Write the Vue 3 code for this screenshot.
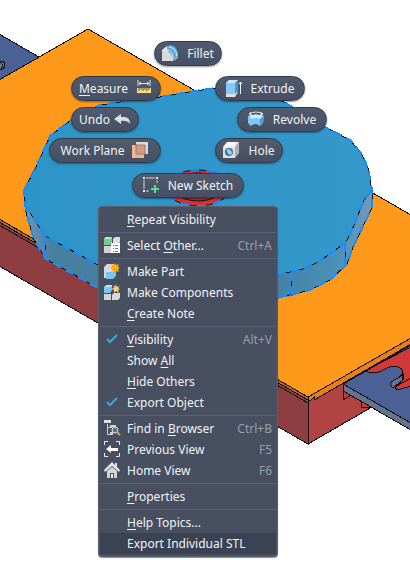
<script setup>
const tools = [
  { id: 'fillet', label: 'Fillet', icon: 'fillet' },
  { id: 'measure', key: 'M', label: 'easure', icon: 'measure', after: true },
  { id: 'extrude', label: 'Extrude', icon: 'extrude' },
  { id: 'undo', label: 'Undo', icon: 'undo', after: true },
  { id: 'revolve', label: 'Revolve', icon: 'revolve' },
  { id: 'plane', label: 'Work Plane', icon: 'plane', after: true },
  { id: 'hole', label: 'Hole', icon: 'hole' },
  { id: 'sketch', label: 'New Sketch', icon: 'sketch' },
]

const groups = [
  [{ text: ['', 'R', 'epeat Visibility'] }],
  [{ text: ['Select ', 'O', 'ther...'], icon: 'select', hint: 'Ctrl+A' }],
  [
    { text: ['Make Part', '', ''], icon: 'part' },
    { text: ['Make Components', '', ''], icon: 'components' },
    { text: ['', 'C', 'reate Note'] },
  ],
  [
    { text: ['', 'V', 'isibility'], icon: 'check', hint: 'Alt+V' },
    { text: ['Show ', 'A', 'll'] },
    { text: ['', 'H', 'ide Others'] },
    { text: ['Export Object', '', ''], icon: 'check' },
  ],
  [
    { text: ['Find in ', 'B', 'rowser'], icon: 'find', hint: 'Ctrl+B' },
    { text: ['Previous View', '', ''], icon: 'previous', hint: 'F5' },
    { text: ['Home View', '', ''], icon: 'home', hint: 'F6' },
  ],
  [{ text: ['', 'P', 'roperties'] }],
  [
    { text: ['', 'H', 'elp Topics...'] },
    { text: ['Export Individual STL', '', ''], active: true },
  ],
]

const shapes = {
  fillet: [
    ['M0 5L5 1H10L6 7L9 16H0Z', '#e6e6e6'],
    ['M0 6H5Q10 8 11 14V16H0Z', '#d9d9d9'],
    ['M5 1Q10 -1 13 2Q16 5 16 11L11 14Q11 8 5 5Z', '#5aaee6'],
    ['M7 2Q14 3 15 11M5 5Q11 6 11 14', 'none', '#d9f0ff'],
    ['M11 14L16 11V13L12 16Z', '#aaa'],
  ],
  measure: [
    ['M2 0V6M14 0V6M3 3.5H13M5 2L3 3.5L5 5M11 2L13 3.5L11 5', 'none', '#e2e2e2'],
    ['M1 8H15V13H1Z', '#ffdc7c'],
    ['M3 8V11M5 8V10M7 8V11M9 8V10M11 8V11M13 8V10', 'none', '#5a5750'],
  ],
  extrude: [
    ['M0 14L2 12H12L9 17H0Z', '#e0e0e0'],
    ['M0 3L3 0H12L9 3V14H0Z', '#88c9fb'],
    ['M0 3L3 0H12L9 3Z', '#c8e9ff'],
    ['M9 3L12 0V11L9 14Z', '#419bd7'],
    ['M14.5 14V2M13 4L14.5 2L16 4', 'none', '#f0f0f0'],
  ],
  undo: [['M0 8L7 3V6H10Q16 6 16 13Q13 9 7 10V13Z', '#dedede']],
  revolve: [
    ['M0 5Q8 2 16 5L15 12L12 15Q7 11 3 15L0 12Z', '#7dc5fa'],
    ['M1 5Q8 2 15 5L12 8Q8 6 4 8Z', '#d1edff'],
    ['M12 8L16 5L15 12L12 15Z', '#479fdb'],
    ['M1 3Q8 -1 15 3M3 1L1 3L4 4M12 1L15 3L12 4', 'none', '#e8e8e8'],
  ],
  plane: [
    ['M4 0H16V12H13V3H4Z', '#d5dbe1'],
    ['M0 3H12V16H0Z', '#f3b48c'],
    ['M4 3H13V12H4Z', '#d09d82', '#9a776f'],
  ],
  hole: [
    ['M0 5L4 0H16L12 5Z', '#f6f6f6'],
    ['M0 5H12V16H0Z', '#dfdfdf'],
    ['M12 5L16 0V11L12 16Z', '#afafaf'],
    ['M2 10A4 4 0 1 1 10 10A4 4 0 1 1 2 10', '#3b6d92'],
    ['M4 7Q9 7 9 12L7 13Q3 11 4 7', '#8cd0fb'],
  ],
  sketch: [
    ['M3 1H12M1 3V12M14 3V6M3 14H6', 'none', '#d6d6d6'],
    ['M0 0H2V2H0ZM13 0H15V2H13ZM0 13H2V15H0Z', '#eee'],
    ['M11 8H13V11H16V13H13V16H11V13H8V11H11Z', '#5bdb86'],
  ],
  select: [
    ['M0 2L2 0H8V6L6 8H0Z', '#76cc92'],
    ['M0 2L2 0H8L6 2Z', '#baf1c8'],
    ['M9 2L11 0H16V5L14 7H9Z', '#ddd'],
    ['M0 9H7V16H0Z', '#d2d2d2'],
    ['M7 6H16V16H7Z', '#fff'],
    ['M9 8.5H10M11 8.5H14M9 11.5H10M11 11.5H14M9 14.5H10M11 14.5H14', 'none', '#2794dd'],
  ],
  part: [
    ['M0 4L3 1H10V7H4V15H0Z', '#d6d6d6'],
    ['M2 9L5 6H12V13L9 16H2Z', '#78c3f5'],
    ['M2 9L5 6H12L9 9Z', '#ccebff'],
    ['M11 0L12 2L15 1L14 4L16 5L14 6L15 9L12 8L11 10L10 8L7 9L8 6L6 5L8 4L7 1L10 2Z', '#ffad12'],
  ],
  components: [
    ['M0 3L3 1H8V6L6 9H0Z', '#79c5f8'],
    ['M0 3L3 1H8L6 3Z', '#c4e8ff'],
    ['M0 10H7V16H0Z', '#d4d4d4'],
    ['M8 11L10 9H16V14L14 16H8Z', '#d9d9d9'],
    ['M12 0L13 3L16 2L14 4L16 5L14 6L15 9L12 7L10 9L10 6L7 5L10 4L9 1L11 3Z', '#ffce78'],
  ],
  check: [['M3 8L6 11L13 4', 'none', '#37a9e1', 2]],
  find: [
    ['M0 0H7V3H0Z', '#e0e0e0'],
    ['M3.5 4V14.5H7M3.5 7.5H8', 'none', '#d2d2d2'],
    ['M6 5H12V7H6ZM6 12H9V15H6Z', '#d2d2d2'],
    ['M8 10A3 3 0 1 1 14 10A3 3 0 1 1 8 10', '#657184', '#e4e4e4'],
    ['M13 12L16 15', 'none', '#d69b69', 2],
  ],
  previous: [
    ['M0.5 4V0.5H4M12 0.5H15.5V4M15.5 12V15.5H12M4 15.5H0.5V12', 'none', '#ededed'],
    ['M2 8L7 4V7H14V10H7V12Z', '#fff'],
  ],
  home: [
    ['M0 8L8 0L11 3V1H13V5L16 8L15 10L8 4L1 10Z', '#e2e2e2'],
    ['M3 9L8 5L13 9V16H10V11H6V16H3Z', '#d5d5d5'],
    ['M7 12H9V16H7Z', '#eee'],
  ],
}
</script>

<template>
  <main class="workspace">
    <svg class="scene" viewBox="0 0 410 577" role="img" aria-label="Model view">
      <defs>
        <linearGradient id="side" x1="0" x2="1"><stop stop-color="#7198b3" /><stop offset=".08" stop-color="#477f9f" /><stop offset=".7" stop-color="#437f9f" /><stop offset=".9" stop-color="#4b91b9" /><stop offset="1" stop-color="#7499b7" /></linearGradient>
        <linearGradient id="face"><stop stop-color="#2d94c8" /><stop offset="1" stop-color="#3498ca" /></linearGradient>
      </defs>
      <g class="edge">
        <path class="navy" d="M-1 34L39 57L-1 81Z" />
        <path class="steel" d="M-1 61Q5 61 5 65Q5 68 0 70M0 62Q4 64 1 70" />
        <path class="maroon" d="M-1 219L308 397V444L-1 266Z" />
        <path class="brick" d="M308 397L410 338V385L308 444Z" />
        <path class="amber" d="M-1 219L308 397V400L-1 222Z" />
        <path class="line" d="M-1 225L308 403" />
        <path class="rust" d="M308 397L411 338V344L314 400V397L311 400H308Z" />
        <path class="orange" d="M88 29L411 215V338L308 397L-1 219V80Z" />
        <path class="white" d="M370 407L411 384V440Z" />
        <path class="red" d="M343 391V400L351 395M361 401V407L370 407" />
        <path class="navy" d="M343 384L366 371L411 345V424Z" />
        <path class="steel" d="M343 384L411 423V430L343 391Z" />
        <path class="red" d="M366 371L380 363L411 347V386L401 389Q395 390 395 387L403 380V373Q403 367 394 366Q388 367 381 371Q373 375 366 371Z" />
        <path class="steel" d="M403 373Q400 378 394 380Q388 384 393 388L395 386L402 381Z" />
        <path class="line" d="M395 387L411 378" />
      </g>
      <path class="side" d="M24 190L26 212L34 240L46 259L98 288L185 302L277 298L292 296L310 290L330 280L347 264L353 247L372 208V190Z" />
      <path class="face" d="M24 190L37 165L50 136L71 120L100 105L120 102L160 97L195 91L215 88H245L284 102L327 128L350 140L361 153L368 168L372 190L364 200L350 235L345 243L320 261L303 269L277 275L185 280L98 265L45 236L25 205Z" />
      <g class="rim">
        <path d="M24 190L37 165L50 136L71 120L100 105L120 102L160 97L195 91L215 88H245L284 102L327 128L350 140L361 153L368 168L372 190V208L353 247L347 264L330 280L310 290L277 298M98 288L46 259L34 240L26 212L24 190M25 205L45 236L98 265M45 236V259M277 275L303 269L320 261L345 243L350 235L364 200L372 190M291 272V296M345 243V264" />
        <path class="highlight" d="M24 190L37 165L50 136L71 120L100 105L120 102L160 97L195 91L215 88H245L284 102L327 128L350 140L361 153L368 168L372 190V208L353 247L347 264L330 280L310 290L277 298M98 288L46 259L34 240L26 212L24 190M25 205L45 236L98 265M45 236V259M277 275L303 269L320 261L345 243L350 235L364 200L372 190M291 272V296M345 243V264" />
      </g>
      <ellipse class="bore" cx="198" cy="188" rx="32" ry="18" />
      <ellipse class="bore-glow" cx="198" cy="188" rx="32" ry="18" />
      <ellipse class="bore-inner" cx="198" cy="187" rx="25" ry="14" />
    </svg>

    <nav aria-label="Marking menu">
      <button v-for="t in tools" :key="t.id" type="button" class="tool" :class="[t.id, { after: t.after }]">
        <svg class="icon" viewBox="0 0 17 17" aria-hidden="true">
          <path v-for="(s, i) in shapes[t.icon]" :key="i" :d="s[0]" :fill="s[1]" :stroke="s[2] || 'none'" />
        </svg>
        <span><u v-if="t.key">{{ t.key }}</u>{{ t.label }}</span>
      </button>
    </nav>

    <div class="menu" role="menu">
      <div v-for="(g, n) in groups" :key="n" class="group" role="group">
        <button v-for="m in g" :key="m.text.join('')" type="button" role="menuitem" class="item" :class="{ active: m.active }">
          <span class="slot">
            <svg v-if="m.icon" class="icon" viewBox="0 0 17 17" aria-hidden="true">
              <path v-for="(s, i) in shapes[m.icon]" :key="i" :d="s[0]" :fill="s[1]" :stroke="s[2] || 'none'" :stroke-width="s[3] || 1" />
            </svg>
          </span>
          <span class="label">{{ m.text[0] }}<u v-if="m.text[1]">{{ m.text[1] }}</u>{{ m.text[2] }}</span>
          <kbd v-if="m.hint">{{ m.hint }}</kbd>
        </button>
      </div>
    </div>
  </main>
</template>

<style>
body { background: #fff; }
</style>

<style scoped>
.workspace { position: relative; overflow: hidden; font: 12px/20px "Noto Sans", sans-serif; }
.scene { display: block; width: 100%; height: auto; }
.edge { stroke: #111; stroke-width: 1; shape-rendering: crispEdges; }
.navy { fill: #4b6094; }
.steel { fill: #65738d; }
.maroon { fill: #8e3d40; }
.brick { fill: #b24343; }
.amber { fill: #b56d1c; }
.rust { fill: #e77f18; }
.orange { fill: #ff991c; }
.red { fill: #cf3939; }
.white { fill: #fff; stroke: none; }
.line { fill: none; }
.side { fill: url(#side); }
.face { fill: url(#face); }
.rim { fill: none; stroke: #111; stroke-width: 1; shape-rendering: crispEdges; }
.highlight { stroke: #168cff; stroke-width: 2; stroke-dasharray: 9 5; }
.bore { fill: #d23335; stroke: #111; }
.bore-glow { fill: none; stroke: #168cff; stroke-width: 2; stroke-dasharray: 9 7; }
.bore-inner { fill: #a92e31; stroke: #111; }
button { margin: 0; border: 0; font: inherit; color: #f2f3f5; }
u { text-decoration: underline; text-underline-offset: 2px; }
.icon { flex: none; width: 17px; height: 17px; overflow: visible; }
.tool { position: absolute; display: flex; align-items: center; justify-content: center; gap: 8px; box-sizing: border-box; height: 25px; padding: 0; border: 1px solid #303b49; border-radius: 13px; background: linear-gradient(#505b6e, #455064); box-shadow: 0 1px 2px #0006; white-space: nowrap; }
.after { flex-direction: row-reverse; }
.fillet { left: 154px; top: 41px; width: 68px; }
.measure { left: 71px; top: 76px; width: 90px; }
.extrude { left: 215px; top: 76px; width: 90px; }
.undo { left: 71px; top: 107px; width: 68px; gap: 4px; }
.revolve { left: 237px; top: 107px; width: 90px; }
.plane { left: 49px; top: 138px; width: 112px; }
.hole { left: 215px; top: 138px; width: 68px; }
.sketch { left: 132px; top: 173px; width: 112px; }
.menu { position: absolute; left: 98px; top: 206px; box-sizing: border-box; width: 180px; padding: 2px 1px; border: 1px solid #59616b; border-radius: 4px; background: #474f61; box-shadow: 0 1px 1px #0007; }
.group + .group { margin-top: 2px; padding-top: 2px; border-top: 1px solid #5a6375; }
.item { display: flex; align-items: center; width: 100%; height: 21px; padding: 0 4px; background: none; text-align: left; white-space: nowrap; }
.active { background: #3a4253; }
.slot { display: flex; flex: none; width: 23px; }
.label { flex: 1; }
kbd { font: inherit; color: #979eaa; }
</style>
